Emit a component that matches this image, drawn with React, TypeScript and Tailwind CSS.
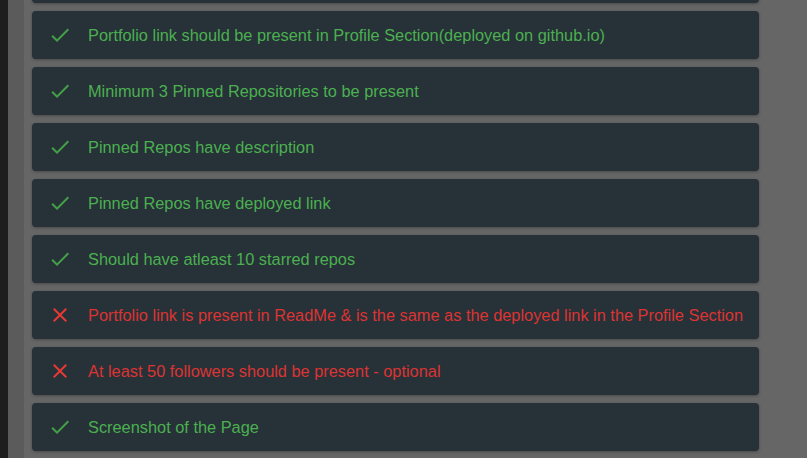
import { Check, X } from 'lucide-react';

type Item = { text: string; ok: boolean };

const ITEMS: Item[] = [
  { text: '', ok: true },
  { text: 'Portfolio link should be present in Profile Section(deployed on github.io)', ok: true },
  { text: 'Minimum 3 Pinned Repositories to be present', ok: true },
  { text: 'Pinned Repos have description', ok: true },
  { text: 'Pinned Repos have deployed link', ok: true },
  { text: 'Should have atleast 10 starred repos', ok: true },
  { text: 'Portfolio link is present in ReadMe & is the same as the deployed link in the Profile Section', ok: false },
  { text: 'At least 50 followers should be present - optional', ok: false },
  { text: 'Screenshot of the Page', ok: true },
];

function CheckIcon() {
  return (
    <svg viewBox="0 0 24 24" className="w-6 h-6 flex-shrink-0" fill="#43a047">
      <path d="M9 16.17 4.83 12l-1.42 1.41L9 19 21 7l-1.41-1.41z" />
    </svg>
  );
}

function CloseIcon() {
  return (
    <svg viewBox="0 0 24 24" className="w-6 h-6 flex-shrink-0" fill="#e53935">
      <path d="M19 6.41 17.59 5 12 10.59 6.41 5 5 6.41 10.59 12 5 17.59 6.41 19 12 13.41 17.59 19 19 17.59 13.41 12z" />
    </svg>
  );
}

export default function App() {
  return (
    <div
      className="flex h-[458px] w-[807px] overflow-hidden bg-[#666666]"
      style={{ fontFamily: '"Liberation Sans", Arial, sans-serif' }}
    >
      <div className="w-2 flex-shrink-0 bg-[#1e1e1e]" />
      <div className="w-4 flex-shrink-0 bg-[#5b5b5b]" />
      <div className="flex-1 pl-2">
        <div className="mt-[-45px] flex flex-col gap-2">
          {ITEMS.map((item, i) => (
            <div
              key={i}
              className="flex h-12 w-[727px] items-center gap-4 rounded bg-[#263238] px-4 shadow-[0_1px_3px_rgba(0,0,0,0.3)]"
            >
              {item.ok ? <CheckIcon /> : <CloseIcon />}
              <span
                className={
                  'whitespace-nowrap text-[16.35px] ' + (item.ok ? 'text-[#4caf50]' : 'text-[#dd3333]')
                }
              >
                {item.text}
              </span>
            </div>
          ))}
        </div>
      </div>
    </div>
  );
}
